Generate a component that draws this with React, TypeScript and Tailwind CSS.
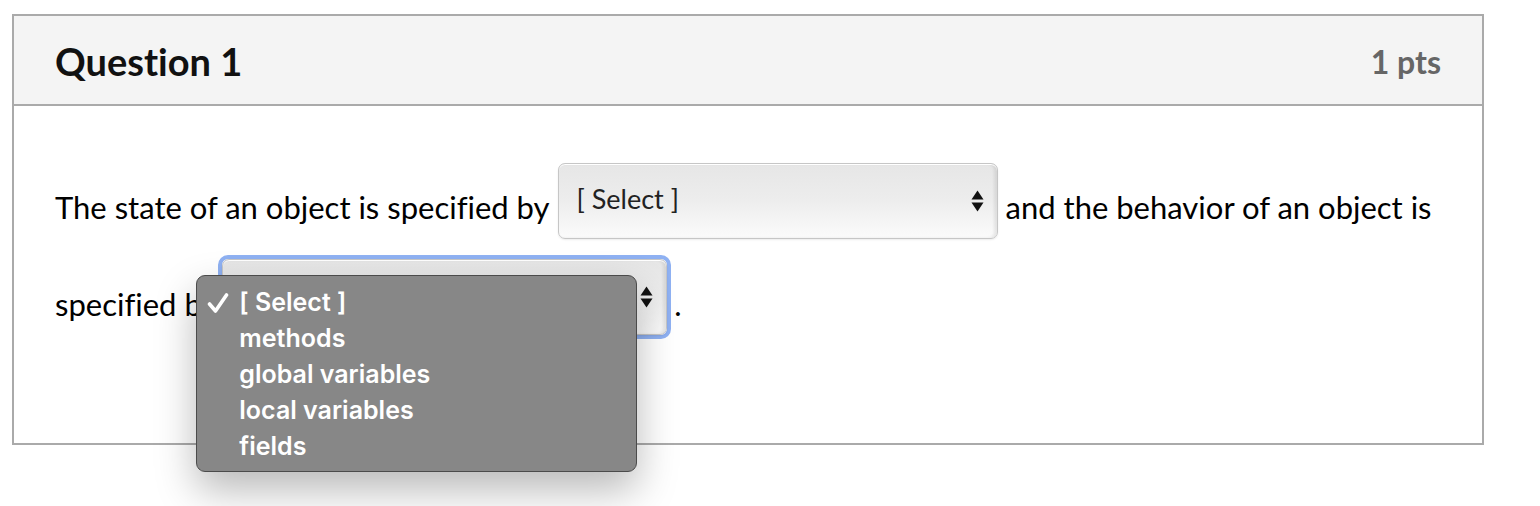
import React from 'react';

const SelectArrows: React.FC = () => (
  <svg width="13" height="22" viewBox="0 0 13 22" className="shrink-0">
    <path d="M6.5 0.5 L12.5 9.5 L0.5 9.5 Z" fill="#111" />
    <path d="M6.5 21.5 L12.5 12.5 L0.5 12.5 Z" fill="#111" />
  </svg>
);

const FakeSelect: React.FC<{ focused?: boolean; children?: React.ReactNode }> = ({ focused, children }) => (
  <div
    className={
      focused
        ? 'relative rounded-[10px] border-[4px] border-[#8fb1f2] p-0'
        : 'relative rounded-[8px] p-0'
    }
  >
    <div
      className={
        (focused ? 'w-[445px] ' : 'w-[440px] ') +
        'flex h-[76px] items-start justify-between rounded-[7px] border border-[#c6c6c6] bg-gradient-to-b from-[#e6e6e6] via-[#ededed] to-[#fbfbfb] pl-[18px] pr-[13px] pt-[19px] shadow-[inset_0_1px_0_#fff,inset_-3px_0_3px_rgba(0,0,0,0.08),0_1px_2px_rgba(0,0,0,0.08)]'
      }
    >
      <span className="text-[27px] leading-[32px] text-[#222]">[ Select ]</span>
      <span className="pt-[7px]">
        <SelectArrows />
      </span>
    </div>
    {children}
  </div>
);

const options = ['[ Select ]', 'methods', 'global variables', 'local variables', 'fields'];

const Check: React.FC = () => (
  <svg width="22" height="22" viewBox="0 0 22 22">
    <path d="M2.5 12 L8.5 19 L19.5 3" fill="none" stroke="#fff" strokeWidth="3.6" strokeLinecap="round" strokeLinejoin="round" />
  </svg>
);

const Dropdown: React.FC = () => (
  <div className="absolute left-[-26px] top-[16px] z-10 h-[197px] w-[441px] rounded-[9px] border border-[#4b4b4b] bg-[#878787] pt-[9px] shadow-[0_18px_40px_rgba(0,0,0,0.28)]">
    {options.map((o, i) => (
      <div
        key={o}
        className="flex h-[36px] items-center text-[25px] font-semibold text-white"
        style={{ fontFamily: 'Inter, sans-serif' }}
      >
        <span className="flex w-[42px] items-center pl-[10px]">{i === 0 ? <Check /> : null}</span>
        <span>{o}</span>
      </div>
    ))}
  </div>
);

const App: React.FC = () => {
  return (
    <div className="min-h-[506px] bg-white pl-[12px] pt-[14px] font-['Lato',sans-serif] text-black [font-variant-ligatures:none]">
      <div className="w-[1472px] border-2 border-[#aaaaaa]">
        <div className="flex h-[90px] items-center justify-between border-b-2 border-[#aaaaaa] bg-[#f4f4f4] pl-[41px] pr-[41px]">
          <h2 className="pt-[2px] text-[38px] font-bold text-[#111]">Question 1</h2>
          <span className="pt-[4px] text-[32px] font-bold text-[#666]">1 pts</span>
        </div>
        <div className="h-[337px] pl-[41px] pt-[57px]">
          <div className="flex items-center text-[31px]">
            <span className="pt-[12px]">The state of an object is specified by</span>
            <span className="ml-[8px] mr-[8px]">
              <FakeSelect />
            </span>
            <span className="pt-[12px]">and the behavior of an object is</span>
          </div>
          <div className="mt-[16px] flex items-center text-[31px]">
            <span className="pt-[14px]">specified by</span>
            <span className="ml-[1px] mr-[3px]">
              <FakeSelect focused>
                <Dropdown />
              </FakeSelect>
            </span>
            <span className="pt-[14px]">.</span>
          </div>
        </div>
      </div>
    </div>
  );
};

export default App;
